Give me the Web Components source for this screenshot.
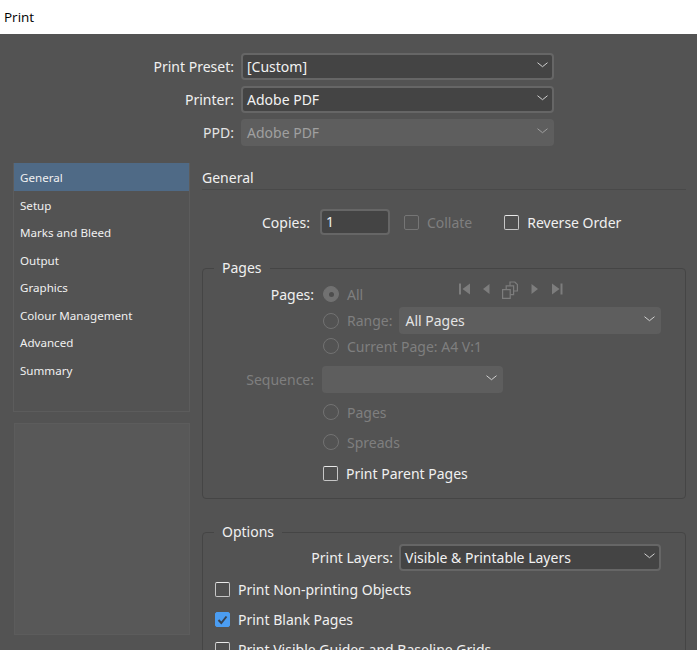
<!DOCTYPE html>
<html><head><meta charset="utf-8"><title>Print</title>
<style>
html,body{margin:0;padding:0;height:650px;overflow:hidden;background:#535353}
body{font-family:"Noto Sans","Open Sans",sans-serif;font-size:14px;color:#f0f0f0}
</style></head><body>
<print-dialog></print-dialog>
<script>
const def=(name,css,html,extra)=>{customElements.define(name,class extends HTMLElement{
  connectedCallback(){ if(this.shadowRoot)return; const r=this.attachShadow({mode:'open'});
    r.innerHTML=`<style>${css}</style>`+(typeof html==='function'?html(this):html);}
});};
const chev=`<svg width="11" height="6" viewBox="0 0 11 6" fill="none"><path d="M.5.7l5 4 5-4" stroke="currentColor" stroke-width="1"/></svg>`;
def('title-bar',`:host{display:flex;align-items:center;height:34px;background:#fff;color:#000;padding-left:4px;font:13.500px "Open Sans","Noto Sans",sans-serif}`,`<slot></slot>`);
def('drop-select',`:host{display:flex;align-items:center;box-sizing:border-box;height:27px;padding:0 4px 0 4px;border:2px solid #666;border-radius:4px;background:#444;color:#f2f2f2;font-size:14px;line-height:1}
:host([disabled]){border-color:#5e5e5e;background:#5e5e5e;color:#a0a0a0}
:host([soft]){border-color:#5e5e5e;background:#5e5e5e;color:#e4e4e4}
span{flex:1;white-space:nowrap} svg{color:#d0d0d0;flex:none;margin-top:-3px}
:host([disabled]) svg{color:#a0a0a0}`,`<span><slot></slot></span>${chev}`);
def('check-box',`:host{display:inline-flex;align-items:center;gap:8px;white-space:nowrap;color:#f0f0f0}
i{box-sizing:border-box;width:15px;height:15px;border:1px solid #c6c6c6;border-top-color:#e8e8e8;border-radius:2px;background:#4f4f4f;flex:none;display:flex}
:host([disabled]){color:#7f7f7f} :host([disabled]) i{border-color:#757575;background:none}
:host([checked]) i{background:#4b9df2;border-color:#4b9df2;align-items:center;justify-content:center}`,
 el=>`<i>${el.hasAttribute('checked')?'<svg width="11" height="10" viewBox="0 0 11 10" fill="none"><path d="M1.5 5l2.8 3L9.5 1.5" stroke="#37424f" stroke-width="2"/></svg>':''}</i><slot></slot>`);
def('radio-btn',`:host{display:inline-flex;align-items:center;gap:8px;white-space:nowrap;color:#7f7f7f}
i{box-sizing:border-box;width:16px;height:16px;border:1px solid #727272;border-radius:50%;flex:none;display:flex;align-items:center;justify-content:center}
:host([on]) i{background:#717171;border-color:#717171}
:host([on]) i::after{content:"";width:5px;height:5px;border-radius:50%;background:#4d4d4d}`,`<i></i><slot></slot>`);
def('group-box',`:host{display:block}
fieldset{margin:0;padding:0;border:1px solid #454545;border-radius:4px;box-sizing:border-box;height:var(--h)}
legend{margin-left:11px;padding:0 8px;font-size:14px;line-height:20px;color:#f0f0f0}`,
 el=>`<fieldset><legend>${el.getAttribute('label')}</legend><slot></slot></fieldset>`);
def('side-nav',`:host{display:block;box-sizing:border-box;width:177px;height:249px;border:1px solid #5c5c5c;border-top:0;font-size:11.600px}`,`<slot></slot>`);
def('nav-item',`:host{display:flex;align-items:center;box-sizing:border-box;height:27.500px;padding:2px 0 0 6px;color:#f0f0f0}
:host([active]){background:#4f6a86}`,`<slot></slot>`);
def('preview-box',`:host{display:block;box-sizing:border-box;width:176px;height:212px;margin:11px 0 0 1px;background:#585858;border:1px solid #5c5c5c}`,``);
def('form-row',`:host{display:grid;grid-template-columns:var(--l,111px) 1fr;column-gap:var(--g,9px);height:var(--rh,26px);align-items:center}
.l{text-align:right;white-space:nowrap;color:var(--lc,#f0f0f0)}
.c{display:flex;align-items:center;min-width:0}`,
 el=>`<div class="l"><slot name="label"></slot></div><div class="c"><slot></slot></div>`);
def('pager-icons',`:host{display:flex;align-items:center;gap:0;color:#7d7d7d;margin-left:95px;margin-top:-11px}
svg{display:block}`,`<svg width="106" height="20" viewBox="0 -2 106 20" fill="currentColor">
<path d="M1 2.500h2v11H1zM12 2.500v11L4.500 8z"/><path d="M31.500 3v10L25 8z"/>
<g fill="none" stroke="currentColor" stroke-width="1.200"><path d="M44.600 8.600h7.600v8.800h-7.600z"/><path d="M48.200 8.600V4.800h7.400v8.800h-3.400"/><path d="M52 4.800V1h4.800l2.600 2.600v6.400h-3.800"/></g>
<path d="M73.500 3v10L80 8zM94 2.500v11L101.500 8zM102.500 2.500h2v11h-2z"/></svg>`);
def('print-dialog',`:host{display:block;width:697px}
.top{display:flex;flex-direction:column;gap:6px;padding-top:19px}
.top form-row{--l:234px;--g:7px;--rh:27px}
.top drop-select{width:313px}
.main{display:flex;margin:17px 0 0 13px}
.side{width:177px;flex:none}
.pane{width:484px;margin-left:12px}
h2{margin:0;height:27px;line-height:30px;font-size:14px;font-weight:400;border-bottom:1px solid #494949;box-sizing:border-box}
.copies{display:flex;align-items:center;height:26px;margin-top:19px;padding-left:60px}
.copies .cl{margin-right:8px}
.num{box-sizing:border-box;width:70px;height:26px;border:2px solid #666;border-radius:4px;background:#444;padding:0 4px;line-height:22px;margin:0 14px 0 2px}
.copies check-box + check-box{margin-left:32px}
.pg{margin-top:23px;--h:241px}
.stack{display:flex;flex-direction:column;margin-top:3px}
.sp7{margin-top:7px}.sp4{margin-top:4px}.sp5{margin-top:5px}
.opt{margin-top:23px;--h:200px}
.layers{--l:190px;--g:6px;--rh:26px;margin-top:2px}
.ck{display:flex;flex-direction:column;gap:15px;padding:12px 0 0 12px}
.ck check-box{height:15px}
.dim{--lc:#7f7f7f}
`,`<title-bar>Print</title-bar>
<div class="top">
<form-row><span slot="label">Print Preset:</span><drop-select>[Custom]</drop-select></form-row>
<form-row><span slot="label">Printer:</span><drop-select>Adobe PDF</drop-select></form-row>
<form-row><span slot="label" style="color:#e4e4e4">PPD:</span><drop-select disabled>Adobe PDF</drop-select></form-row>
</div>
<div class="main">
<div class="side">
<side-nav><nav-item active>General</nav-item><nav-item>Setup</nav-item><nav-item>Marks and Bleed</nav-item><nav-item>Output</nav-item><nav-item>Graphics</nav-item><nav-item>Colour Management</nav-item><nav-item>Advanced</nav-item><nav-item>Summary</nav-item></side-nav>
<preview-box></preview-box>
</div>
<div class="pane">
<h2>General</h2>
<div class="copies"><span class="cl">Copies:</span><div class="num">1</div><check-box disabled>Collate</check-box><check-box>Reverse Order</check-box></div>
<group-box class="pg" label="Pages">
<div class="stack">
<form-row><span slot="label">Pages:</span><radio-btn on>All</radio-btn><pager-icons></pager-icons></form-row>
<form-row><span slot="label"></span><radio-btn>Range:</radio-btn><drop-select soft style="width:262px;margin-left:7px">All Pages</drop-select></form-row>
<form-row><span slot="label"></span><radio-btn>Current Page: A4 V:1</radio-btn></form-row>
<form-row class="sp7 dim"><span slot="label">Sequence:</span><drop-select soft style="width:181px;margin-left:-1px"></drop-select></form-row>
<form-row class="sp7"><span slot="label"></span><radio-btn>Pages</radio-btn></form-row>
<form-row class="sp4"><span slot="label"></span><radio-btn>Spreads</radio-btn></form-row>
<form-row class="sp5"><span slot="label"></span><check-box>Print Parent Pages</check-box></form-row>
</div>
</group-box>
<group-box class="opt" label="Options">
<form-row class="layers"><span slot="label">Print Layers:</span><drop-select style="width:262px">Visible &amp; Printable Layers</drop-select></form-row>
<div class="ck"><check-box>Print Non-printing Objects</check-box><check-box checked>Print Blank Pages</check-box><check-box>Print Visible Guides and Baseline Grids</check-box></div>
</group-box>
</div>
</div>`);
</script>
</body></html>
